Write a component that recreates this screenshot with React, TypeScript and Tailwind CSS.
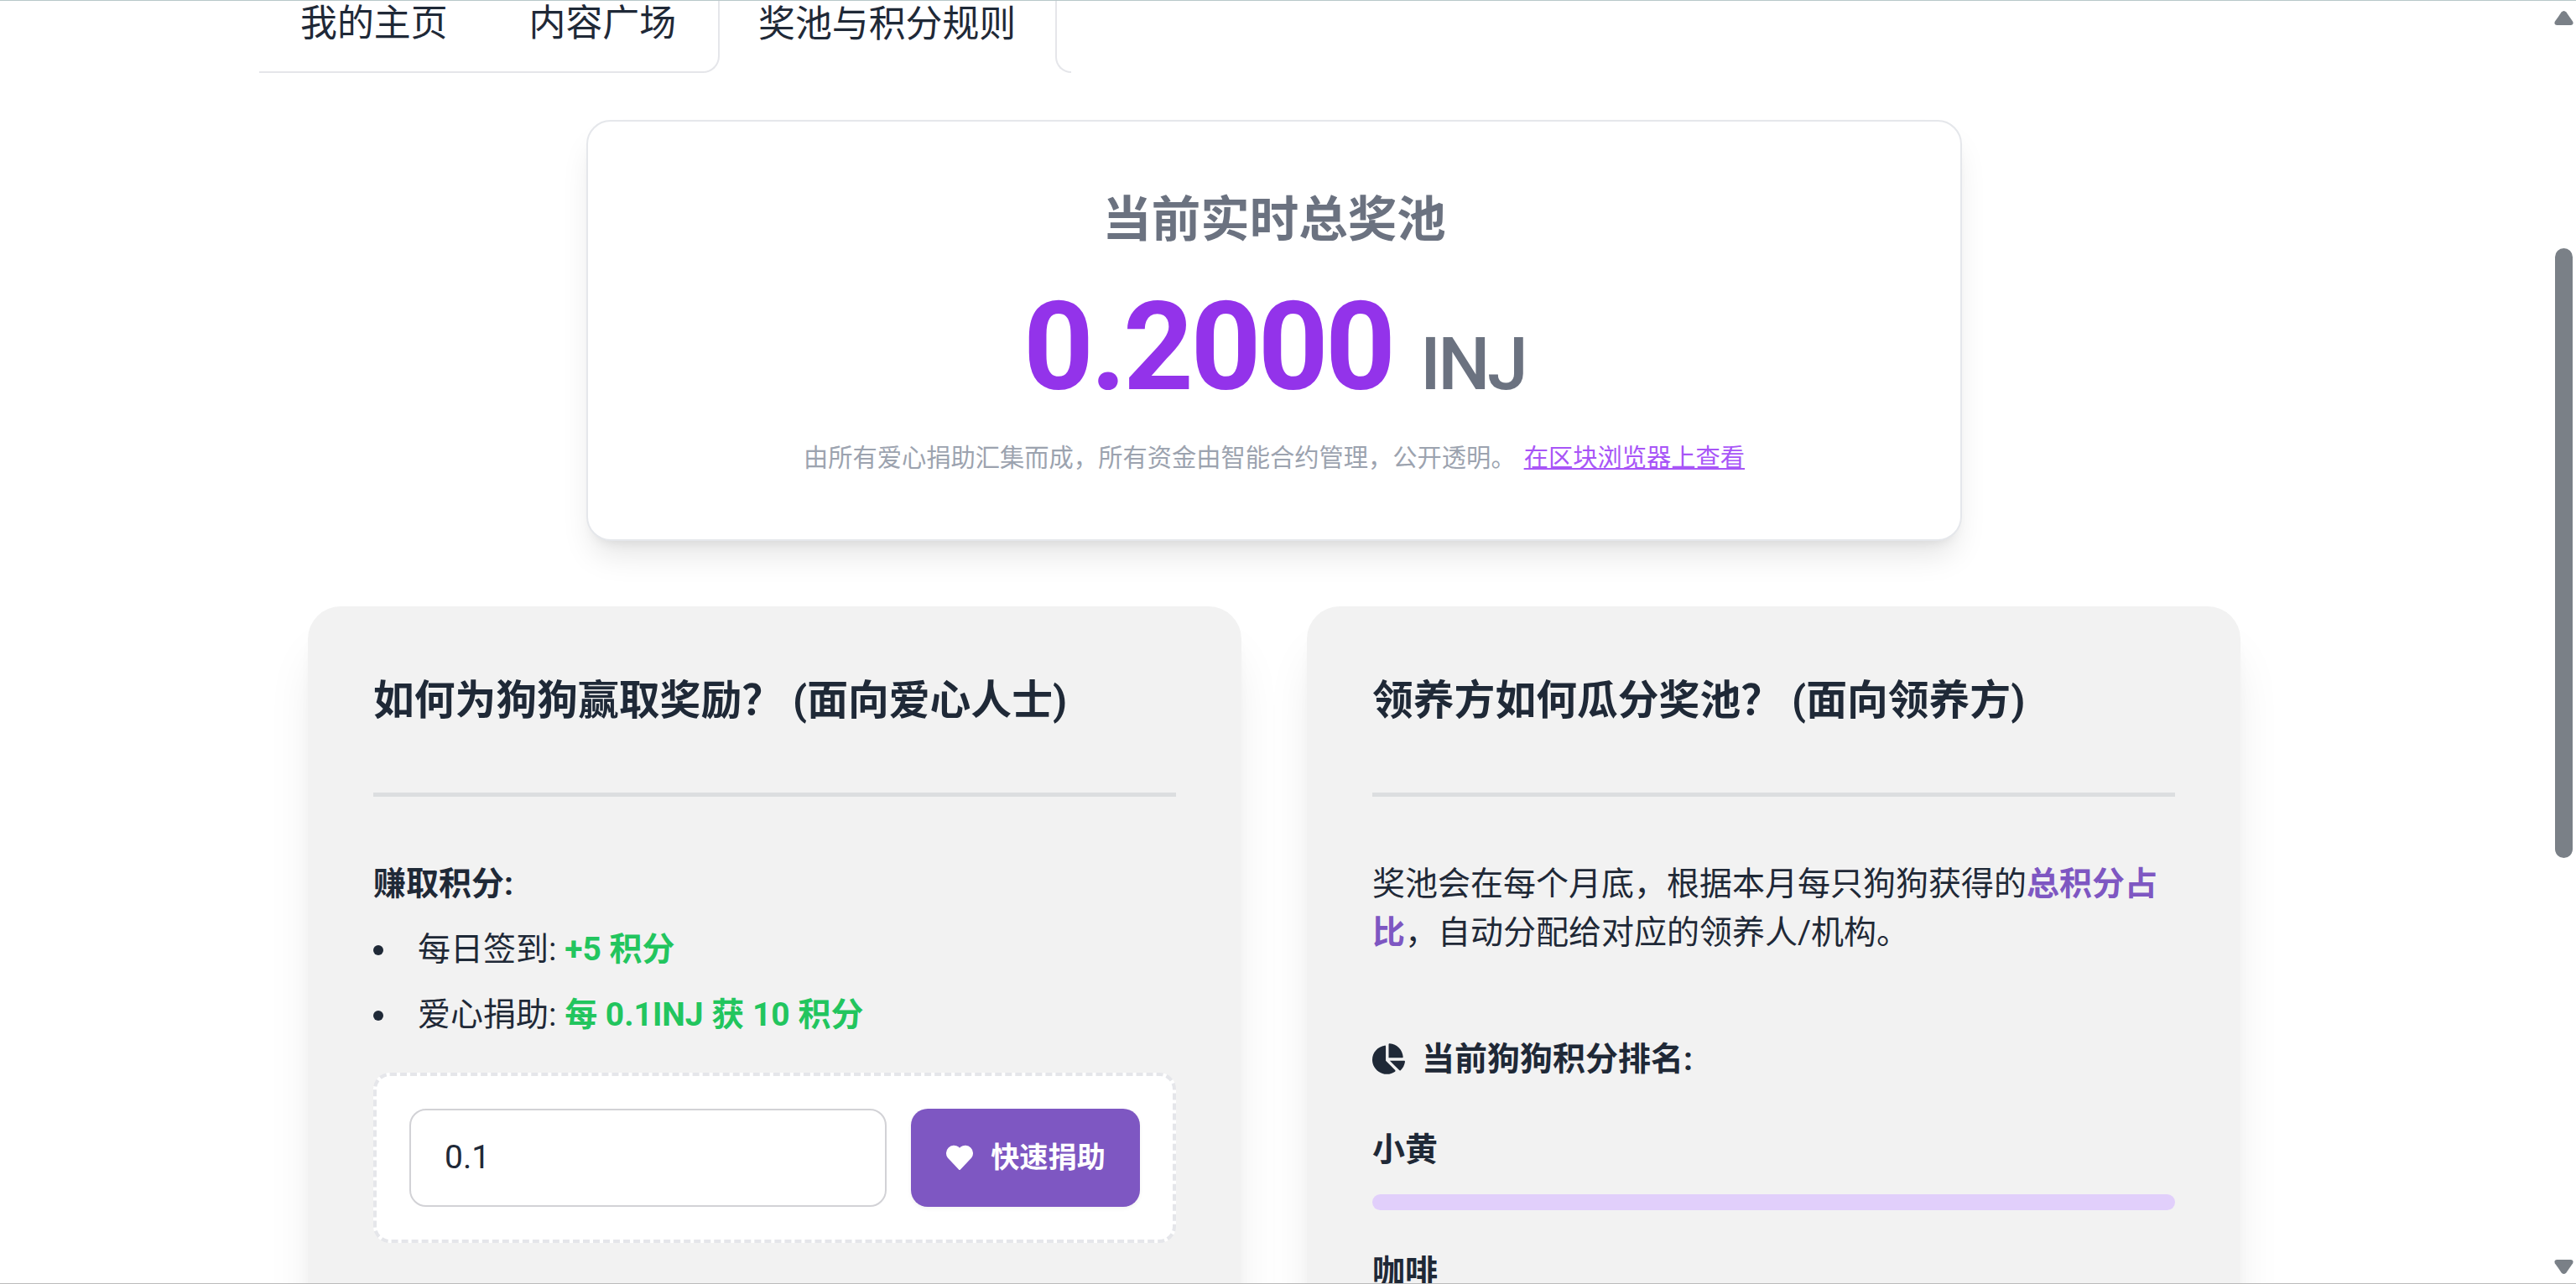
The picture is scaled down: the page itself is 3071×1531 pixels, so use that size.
import type { ReactNode } from 'react'
import { FaChartPie } from 'react-icons/fa'

const ranking = [
  { name: '小黄', percent: 0 },
  { name: '咖啡', percent: 0 }
]

function TabBar() {
  return (
    <nav className="flex h-[86px] items-end text-[43.9px] leading-[60px]">
      <div className="flex h-[117px] w-[549px] shrink-0 items-center gap-[97px] rounded-br-[20px] border-r-2 border-b-2 border-[#e5e6ea] pl-[49px]">
        <a>我的主页</a>
        <a>内容广场</a>
      </div>
      <div className="flex h-[117px] w-[400px] shrink-0 items-center pl-[46px]">
        <a>奖池与积分规则</a>
      </div>
      <div className="h-[117px] w-[19px] shrink-0 rounded-bl-[20px] border-b-2 border-l-2 border-[#e5e6ea]" />
    </nav>
  )
}

function PrizePool() {
  return (
    <section className="mx-auto mt-[56px] h-[502px] w-[1640px] rounded-[29px] border-2 border-[#e5e7eb] bg-white pt-[78px] text-center shadow-[0_24px_37px_-7px_rgba(0,0,0,0.1),0_10px_15px_-10px_rgba(0,0,0,0.1)]">
      <h2 className="text-[58.5px] leading-[78px] font-bold text-[#6b7280]">当前实时总奖池</h2>
      <p className="mt-[40px] text-[146.4px] leading-[146px] font-bold tracking-[-3.66px] text-[#9333ea]">
        0.2000 <span className="text-[87.8px] leading-none font-medium text-[#6b7280]">INJ</span>
      </p>
      <p className="mt-[40px] text-[29.27px] leading-[39px] text-[#9ca3af]">
        由所有爱心捐助汇集而成，所有资金由智能合约管理，公开透明。
        <a className="ml-[10px] text-[#a855f7] underline">在区块浏览器上查看</a>
      </p>
    </section>
  )
}

function RuleCard({ title, children }: { title: string; children: ReactNode }) {
  return (
    <section className="h-[1000px] w-[1113px] shrink-0 rounded-[39px] bg-[#f2f2f2] p-[78px] shadow-[0_49px_61px_-12px_rgba(0,0,0,0.1),0_20px_24px_-15px_rgba(0,0,0,0.1)]">
      <h3 className="pt-px text-[48.8px] leading-[68px] font-bold">{title}</h3>
      <div className="mt-[75px] mb-[74.5px] h-[5px] bg-[#dcdee0]" />
      {children}
    </section>
  )
}

function QuickDonate() {
  return (
    <div className="mt-[39.5px] flex gap-[29px] rounded-[20px] border-4 border-dashed border-[#e5e6ea] bg-white p-[39px]">
      <div className="flex h-[117px] flex-1 items-center rounded-[20px] border-2 border-[#d2d2d6] px-[40px]">0.1</div>
      <button className="flex h-[117px] w-[273px] items-center justify-center gap-[20px] rounded-[20px] bg-[#7e57c2] text-[34.15px] font-bold text-white shadow-[0_2px_5px_rgba(0,0,0,0.05)]">
        <svg viewBox="0 0 34 30" className="h-[30px] w-[34px]" fill="currentColor">
          <path d="M2.8 15.6A9.3 9.3 0 0 1 15.8 2.6L17 3.8L18.2 2.6A9.3 9.3 0 0 1 31.2 15.6L18 29.4Q17 30.4 16 29.4Z" />
        </svg>
        快速捐助
      </button>
    </div>
  )
}

function Scrollbar() {
  return (
    <div className="flex w-[26px] shrink-0 flex-col items-start text-[#7a8087]">
      <svg viewBox="0 0 23 17" className="mt-[12px] h-[17px] w-[23px]" fill="currentColor">
        <path d="M8.6 1.6Q11.5-1.4 14.4 1.6L22.2 12.8Q23.6 16.6 20 17H3Q-.6 16.6.8 12.8Z" />
      </svg>
      <div className="mt-[266px] ml-px h-[727px] w-[21px] rounded-full bg-[#7a8087]" />
      <svg viewBox="0 0 23 17" className="mt-[479px] h-[17px] w-[23px] rotate-180" fill="currentColor">
        <path d="M8.6 1.6Q11.5-1.4 14.4 1.6L22.2 12.8Q23.6 16.6 20 17H3Q-.6 16.6.8 12.8Z" />
      </svg>
    </div>
  )
}

export default function App() {
  return (
    <div className="flex h-[1531px] w-[3071px] overflow-hidden border-t border-b border-t-[#b8c8c9] border-b-[#bbbbbb] bg-white font-['Roboto','Noto_Sans_CJK_SC',sans-serif] text-[39px] leading-[58.5px] text-[#1f2937]">
      <main className="flex-1 pl-[309px]">
        <TabBar />
        <div className="w-[2420px]">
          <PrizePool />
          <div className="mt-[78px] flex justify-center gap-[78px]">
            <RuleCard title="如何为狗狗赢取奖励？ (面向爱心人士)">
              <p className="font-bold">赚取积分:</p>
              <ul>
                <li className="mt-[19.5px] flex items-center">
                  <span className="mt-[3px] mr-[41px] h-[12px] w-[12px] rounded-full bg-[#1f2937]" />
                  <span>
                    每日签到: <b className="text-[#22c55e]">+5 积分</b>
                  </span>
                </li>
                <li className="mt-[19.5px] flex items-center">
                  <span className="mt-[3px] mr-[41px] h-[12px] w-[12px] rounded-full bg-[#1f2937]" />
                  <span>
                    爱心捐助: <b className="text-[#22c55e]">每 0.1INJ 获 10 积分</b>
                  </span>
                </li>
              </ul>
              <QuickDonate />
            </RuleCard>
            <RuleCard title="领养方如何瓜分奖池？ (面向领养方)">
              <p>
                奖池会在每个月底，根据本月每只狗狗获得的<b className="text-[#7e57c2]">总积分占比</b>
                ，自动分配给对应的领养人/机构。
              </p>
              <h4 className="mt-[92px] flex items-center gap-[20px] font-bold">
                <FaChartPie className="h-[39px] w-[39px]" />
                当前狗狗积分排名:
              </h4>
              <div className="mt-[50px] flex flex-col gap-[45px]">
                {ranking.map((dog) => (
                  <div key={dog.name}>
                    <p className="font-bold">{dog.name}</p>
                    <div className="mt-[23px] h-[19.5px] overflow-hidden rounded-full bg-[#e1cffb]">
                      <div className="h-full bg-[#9333ea]" style={{ width: `${dog.percent}%` }} />
                    </div>
                  </div>
                ))}
              </div>
            </RuleCard>
          </div>
        </div>
      </main>
      <Scrollbar />
    </div>
  )
}
